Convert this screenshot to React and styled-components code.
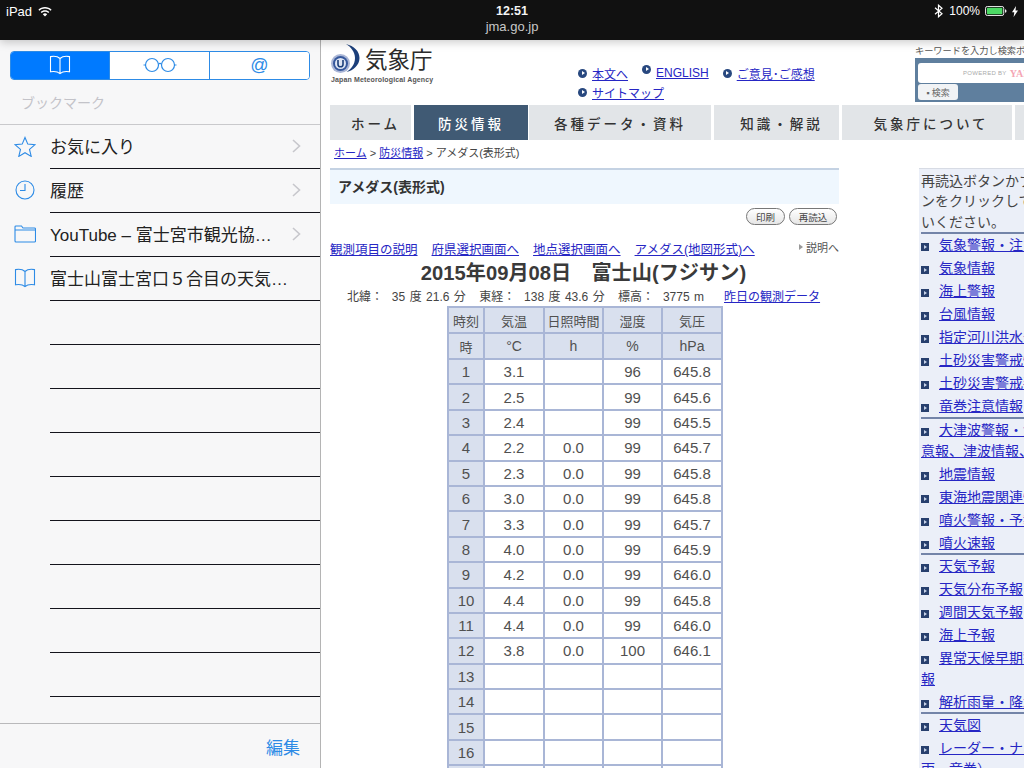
import React from "react";
import styled, { createGlobalStyle } from "styled-components";

const FONT = `"Liberation Sans", "Noto Sans CJK JP", sans-serif`;

const Global = createGlobalStyle`
  html, body { margin: 0; padding: 0; background: #fff; overflow: hidden; }
  body { font-family: ${FONT}; }
`;

const Screen = styled.div`
  width: 1024px; height: 768px; overflow: hidden;
  display: flex; flex-direction: column;
`;
const StatusBar = styled.header`
  height: 40px; flex: none; background: #111; color: #fff;
  display: grid; grid-template-columns: 1fr auto 1fr; padding: 3px 6px 0;
  box-sizing: border-box; position: relative; z-index: 2;
  box-shadow: 0 2px 9px rgba(0,0,0,.22);
`;
const StatusLeft = styled.div`
  display: flex; align-items: center; gap: 6px; height: 16px; font-size: 13px;
`;
const StatusRight = styled.div`
  display: flex; align-items: center; justify-content: flex-end; gap: 5px; height: 16px;
  font-size: 12px;
`;
const StatusCenter = styled.div`
  display: flex; flex-direction: column; align-items: center; font-size: 13px; line-height: 16px;
`;
const Clock = styled.span`font-weight: 700; color: #f4f4f4; font-size: 12.5px;`;
const Domain = styled.span`color: #c8c8c8; margin-top: 0;`;
const Percent = styled.span`margin-left: 1px;`;

const Body = styled.div`flex: 1; display: flex; min-height: 0;`;

const Sidebar = styled.aside`
  width: 321px; flex: none; box-sizing: border-box; background: #f7f7f8;
  border-right: 1px solid #b4b4b4; display: flex; flex-direction: column;
`;
const SideHead = styled.div`
  height: 85px; flex: none; box-sizing: border-box; padding: 11px 10px 0;
  border-bottom: 1px solid #c9c9cc;
`;
const Segments = styled.div`
  height: 29px; display: grid; grid-template-columns: 98px 100px 100px; box-sizing: border-box;
  border: 1px solid #2d8be6; border-radius: 4px; overflow: hidden; background: #fff;
`;
const Segment = styled.div`
  display: flex; align-items: center; justify-content: center;
  background: ${p => (p.$active ? "#007aff" : "#fff")};
  color: ${p => (p.$active ? "#fff" : "#2d8be6")};
  border-left: ${p => (p.$first ? "none" : "1px solid #2d8be6")};
  font-size: 18px; padding-bottom: 1px;
`;
const SideTitle = styled.div`
  margin: 13px 0 0 11px; font-size: 14px; line-height: 20px; color: #c3c3c9;
`;
const Rows = styled.div`flex: 1; display: flex; flex-direction: column; min-height: 0;`;
const Row = styled.div`
  height: 44px; flex: none; box-sizing: border-box; display: flex; align-items: center;
  padding-left: 13px; position: relative;
`;
const RowIcon = styled.div`
  width: 24px; height: 24px; margin: -2px 13px 0 0; color: #2d8be6;
  display: flex; align-items: center; justify-content: center; flex: none;
`;
const RowBody = styled.div`
  flex: 1; height: 44px; box-sizing: border-box; border-bottom: 1px solid #14141c;
  display: flex; align-items: center; justify-content: space-between; padding: 0 19px 2px 0;
  font-size: 17px; color: #222; white-space: nowrap; margin-left: ${p => (p.$empty ? "37px" : "0")};
`;
const Footer = styled.div`
  height: 45px; flex: none; box-sizing: border-box; border-top: 1px solid #b9b9bb;
  margin-top: auto; display: flex; align-items: center; justify-content: flex-end;
  padding: 0 20px 0 0; font-size: 17px; color: #2d8be6;
`;

const Web = styled.main`
  flex: 1; min-width: 0; overflow: hidden; background: #fff; padding-left: 9px;
  color: #333;
`;
const Masthead = styled.div`
  height: 65px; display: grid; grid-template-columns: 247px 338px 240px;
`;
const LogoBlock = styled.div`padding-top: 4px; width: 104px;`;
const LogoTop = styled.div`display: flex; align-items: center; gap: 5px; height: 32px;`;
const LogoName = styled.span`
  font-size: 22.500px; line-height: 30px; color: #2b2b2b; font-weight: 400; padding-top: 1px;
`;
const LogoSub = styled.div`
  font-size: 7px; line-height: 10px; font-weight: 700; color: #555; white-space: nowrap; margin-top: -1px;
  letter-spacing: .14px; padding-left: 1px;
`;
const TopLinks = styled.div`padding: 24px 0 0 1px; font-size: 12px;`;
const TopLine = styled.div`display: flex; align-items: center; height: 19px; white-space: nowrap;`;
const TopLink = styled.a`
  color: #2626c4; text-decoration: underline; margin-left: 5px; margin-right: ${p => p.$mr || 0}px;
  position: relative; top: ${p => p.$top || 0}px;
`;
const Bullet = styled.span`
  width: 9px; height: 9px; border-radius: 50%; background: #28487f; display: inline-block; position: relative; flex: none;
  top: ${p => p.$top || 0}px;
  &::after {
    content: ""; position: absolute; left: 3.500px; top: 2px;
    border-left: 3.500px solid #fff; border-top: 2.500px solid transparent; border-bottom: 2.500px solid transparent;
  }
`;
const Search = styled.div`padding-top: 6px; font-size: 9.200px; color: #555; width: 240px;`;
const SearchLabel = styled.div`line-height: 11px; white-space: nowrap;`;
const SearchBox = styled.div`
  background: #5f7f9e; height: 44px; box-sizing: border-box; padding: 5px 0 0 3px; margin-top: 1px;
`;
const SearchInput = styled.div`
  height: 20px; background: #fff; border-radius: 3px 0 0 3px; margin-bottom: 1px;
  display: flex; align-items: center; padding-left: 45px; font-size: 6px; color: #aaa; letter-spacing: .3px; white-space: nowrap;
`;
const Yahoo = styled.b`
  color: #f4a6b4; font-family: "Liberation Serif", serif; font-size: 10px; margin-left: 3px; letter-spacing: 0;
`;
const SearchBtn = styled.div`
  width: 40px; height: 16px; background: #f1f3f5; border-radius: 3px; font-size: 9px; color: #666;
  display: flex; align-items: center; justify-content: center; gap: 3px; box-sizing: border-box;
`;

const Nav = styled.nav`display: flex; height: 35px;`;
const Tab = styled.div`
  width: ${p => p.$w}px; margin-left: ${p => p.$gap}px; flex: none; box-sizing: border-box;
  padding-left: ${p => p.$pl || 0}px;
  background: ${p => (p.$active ? "#405a74" : "#e2e5e8")};
  color: ${p => (p.$active ? "#fff" : "#333")};
  display: flex; align-items: center; justify-content: center;
  font-size: 13.500px; font-weight: 500; letter-spacing: 3px; white-space: nowrap;
`;

const Columns = styled.div`display: flex; gap: 80px; align-items: flex-start;`;
const MainCol = styled.div`width: 509px; flex: none;`;
const Crumb = styled.div`
  height: 28px; padding: 5px 0 0 4px; box-sizing: border-box; font-size: 11px; line-height: 16px; color: #444;
  a { color: #2626c4; text-decoration: underline; }
`;
const Heading = styled.h1`
  margin: 0; height: 36px; box-sizing: border-box; background: #eff7fe; border-top: 2px solid #c4d2e3;
  font-size: 14px; font-weight: 700; line-height: 34px; padding-left: 8px; color: #333;
`;
const Buttons = styled.div`display: flex; justify-content: flex-end; gap: 4px; padding: 4px 2px 0 0; height: 21px; box-sizing: content-box;`;
const Pill = styled.div`
  width: ${p => p.$w}px; height: 17px; box-sizing: border-box; border: 1px solid #777; border-radius: 9px;
  background: linear-gradient(#fff, #e6e6e6); font-size: 9.500px; color: #444;
  display: flex; align-items: center; justify-content: center;
`;
const LinkRow = styled.div`
  display: flex; align-items: center; height: 17px; margin-top: 11px; font-size: 12.500px; white-space: nowrap;
`;
const PageLink = styled.a`color: #2626c4; text-decoration: underline; margin-right: 14px;`;
const Explain = styled.span`
  margin: -4px 0 0 auto; font-size: 11px; color: #555; display: flex; align-items: center; gap: 3px;
  &::before {
    content: ""; border-left: 4px solid #999; border-top: 3px solid transparent; border-bottom: 3px solid transparent;
  }
`;
const Title = styled.h2`
  margin: 3px 0 0; font-size: 20.200px; line-height: 26px; font-weight: 700; text-align: center; color: #3a3a3a;
  white-space: pre; position: relative; left: -1px;
`;
const Coords = styled.div`
  display: flex; justify-content: flex-start; font-size: 12px; line-height: 16px; color: #444; margin-top: 3px;
  padding-left: 17px; white-space: pre; word-spacing: 1.100px;
  a { color: #2626c4; text-decoration: underline; margin-left: 20px; word-spacing: 0; }
`;
const DataGrid = styled.div`
  margin: 1px 0 0 117px; display: grid; width: 276px; box-sizing: border-box;
  grid-template-columns: 36px 60px 59px 59px 60px;
  grid-auto-rows: 25.400px; grid-template-rows: 26px 26px;
  border-top: 2px solid #a9b6d6; border-left: 2px solid #a9b6d6;
`;
const Cell = styled.div`
  box-sizing: border-box; border-right: 2px solid #a9b6d6; border-bottom: 2px solid #a9b6d6;
  display: flex; align-items: center; justify-content: center; color: #505050; white-space: nowrap;
  font-size: ${p => p.$fs || 15}px;
  background: ${p => (p.$head ? "#d9e0ee" : "#fff")};
`;

const SidePanel = styled.div`
  width: 300px; flex: none; margin-top: 28px; background: #ebeff8; border-top: 1px solid #d7dbe4;
  font-size: 14px; padding: 2px 0 0 2px; box-sizing: border-box; color: #444; white-space: nowrap;
`;
const PanelNote = styled.div`line-height: 20.400px;`;
const PanelGroup = styled.div`
  border-top: 2px solid #7384a8;
  & + & { margin-top: -1.700px; }
`;
const PanelItem = styled.div`
  line-height: 21px; padding: 1px 0;
  a { color: #2626c4; text-decoration: underline; }
`;
const Square = styled.span`
  display: inline-block; width: 8px; height: 8px; background: #28406e; margin-right: 10px; position: relative; top: 1px;
  &::after {
    content: ""; position: absolute; left: 3px; top: 2px;
    border-left: 3px solid #c9d4ea; border-top: 2px solid transparent; border-bottom: 2px solid transparent;
  }
`;

const Book = ({ w = 22, h = 20 }) => (
  <svg width={w} height={h} viewBox="0 0 22 20" fill="none" stroke="currentColor" strokeWidth="1.100">
    <path d="M11 3.500C9 1.600 5 1 1.500 1.600V16.800C5 16.200 9 16.800 11 18.600C13 16.800 17 16.200 20.500 16.800V1.600C17 1 13 1.600 11 3.500ZM11 3.500V18.600" />
  </svg>
);
const Glasses = () => (
  <svg width="34" height="16" viewBox="0 0 34 16" fill="none" stroke="currentColor" strokeWidth="1.200">
    <circle cx="9" cy="8" r="6.500" /><circle cx="25" cy="8" r="6.500" />
    <path d="M15.500 7c1-.7 2-.7 3 0M0.500 8h2M31.500 8h2" />
  </svg>
);
const Star = () => (
  <svg width="22" height="21" viewBox="0 0 22 21" fill="none" stroke="currentColor" strokeWidth="1.100">
    <path d="M11 1.500l2.800 6.600 7.200.6-5.500 4.700 1.700 7-6.200-3.700-6.200 3.700 1.700-7L1 8.700l7.200-.6z" />
  </svg>
);
const ClockIcon = () => (
  <svg width="20" height="20" viewBox="0 0 20 20" fill="none" stroke="currentColor" strokeWidth="1.100">
    <circle cx="10" cy="10" r="9" /><path d="M10 4v6.500H5" />
  </svg>
);
const Folder = () => (
  <svg width="22" height="18" viewBox="0 0 22 18" fill="none" stroke="currentColor" strokeWidth="1.100">
    <path d="M1 4V1.800C1 1.200 1.300 1 2 1h5.500l1.500 2h11.500c.6 0 1 .4 1 1v12c0 .6-.4 1-1 1H2c-.7 0-1-.4-1-1zM1 5h20.500" />
  </svg>
);
const Chevron = () => (
  <svg width="9" height="14" viewBox="0 0 9 14" fill="none" stroke="#c7c7cc" strokeWidth="1.600">
    <path d="M1 1l6.500 6L1 13" />
  </svg>
);
const Wifi = () => (
  <svg width="14" height="11" viewBox="0 0 14 11" fill="#fff">
    <path d="M7 1c2.600 0 4.900 1 6.600 2.700l-1 1.100C11.100 3.400 9.200 2.500 7 2.500S2.900 3.400 1.400 4.800l-1-1.100C2.100 2 4.400 1 7 1zm0 3.200c1.700 0 3.200.6 4.300 1.700l-1 1.100C9.400 6.200 8.300 5.700 7 5.700s-2.400.5-3.300 1.300l-1-1.100C3.800 4.800 5.300 4.200 7 4.200zm0 3.100c.9 0 1.600.3 2.200.9L7 10.500 4.800 8.200c.6-.6 1.300-.9 2.200-.9z" />
  </svg>
);
const Bluetooth = () => (
  <svg width="9" height="14" viewBox="0 0 9 14" fill="none" stroke="#fff" strokeWidth="1.200">
    <path d="M1 3.800l7 6-3.500 3V1.200l3.500 3-7 6" />
  </svg>
);
const Battery = () => (
  <svg width="22" height="10" viewBox="0 0 24 11">
    <rect x=".5" y=".5" width="20" height="10" rx="2" fill="none" stroke="#fff" />
    <rect x="2" y="2" width="17" height="7" rx="1" fill="#4cd964" />
    <path d="M22 3.500c1 .2 1.500 1 1.500 2s-.5 1.800-1.500 2z" fill="#fff" />
  </svg>
);
const Bolt = () => (
  <svg width="6" height="11" viewBox="0 0 6 11" fill="#fff"><path d="M4 0L0 6.200h2.300L1.600 11 6 4.500H3.500z" /></svg>
);
const Logo = () => (
  <svg width="30" height="34" viewBox="0 0 30 34">
    <path d="M16 1C24 3 29.500 8 29.500 15c0 7-6 12.500-13 14 4.500-3 8.500-7.500 8.500-14C25 9 21 4 16 1z" fill="#1c3f7a" />
    <circle cx="10.500" cy="20.500" r="9.500" fill="#aab6d6" />
    <circle cx="10.500" cy="20.500" r="7.500" fill="#36589c" />
    <circle cx="10.500" cy="20.500" r="5.500" fill="#dfe6f4" />
    <path d="M8 17v4.500c0 1.500 1 2.300 2.500 2.300s2.500-.8 2.500-2.300V17" fill="none" stroke="#1c3f7a" strokeWidth="1.600" />
  </svg>
);

const hours = [
  ["1", "3.1", "", "96", "645.8"], ["2", "2.5", "", "99", "645.6"], ["3", "2.4", "", "99", "645.5"],
  ["4", "2.2", "0.0", "99", "645.7"], ["5", "2.3", "0.0", "99", "645.8"], ["6", "3.0", "0.0", "99", "645.8"],
  ["7", "3.3", "0.0", "99", "645.7"], ["8", "4.0", "0.0", "99", "645.9"], ["9", "4.2", "0.0", "99", "646.0"],
  ["10", "4.4", "0.0", "99", "645.8"], ["11", "4.4", "0.0", "99", "646.0"], ["12", "3.8", "0.0", "100", "646.1"],
  ["13", "", "", "", ""], ["14", "", "", "", ""], ["15", "", "", "", ""], ["16", "", "", "", ""], ["17", "", "", "", ""],
];
const head1 = ["時刻", "気温", "日照時間", "湿度", "気圧"];
const head2 = ["時", "°C", "h", "%", "hPa"];

const groups = [
  [["気象警報・注意報"], ["気象情報"], ["海上警報"], ["台風情報"], ["指定河川洪水予報"], ["土砂災害警戒情報"], ["土砂災害警戒判定メッシュ情報"], ["竜巻注意情報"]],
  [["大津波警報・注", "意報、津波情報、津波予報"], ["地震情報"], ["東海地震関連情報"], ["噴火警報・予報"], ["噴火速報"]],
  [["天気予報"], ["天気分布予報"], ["週間天気予報"], ["海上予報"], ["異常天候早期警戒情", "報"], ["解析雨量・降水短時間予報"]],
  [["天気図"], ["レーダー・ナウキャスト（降", "雨・竜巻）"]],
];

export default function App() {
  return (
    <Screen>
      <Global />
      <StatusBar>
        <StatusLeft>iPad <Wifi /></StatusLeft>
        <StatusCenter><Clock>12:51</Clock><Domain>jma.go.jp</Domain></StatusCenter>
        <StatusRight><Bluetooth /><Percent>100%</Percent><Battery /><Bolt /></StatusRight>
      </StatusBar>
      <Body>
        <Sidebar>
          <SideHead>
            <Segments>
              <Segment $active $first><Book /></Segment>
              <Segment><Glasses /></Segment>
              <Segment>@</Segment>
            </Segments>
            <SideTitle>ブックマーク</SideTitle>
          </SideHead>
          <Rows>
            <Row><RowIcon><Star /></RowIcon><RowBody>お気に入り<Chevron /></RowBody></Row>
            <Row><RowIcon><ClockIcon /></RowIcon><RowBody>履歴<Chevron /></RowBody></Row>
            <Row><RowIcon><Folder /></RowIcon><RowBody>YouTube – 富士宮市観光協…<Chevron /></RowBody></Row>
            <Row><RowIcon><Book /></RowIcon><RowBody>富士山富士宮口５合目の天気…</RowBody></Row>
            {Array.from({ length: 9 }).map((_, i) => (
              <Row key={i}><RowBody $empty /></Row>
            ))}
            <Footer>編集</Footer>
          </Rows>
        </Sidebar>
        <Web>
          <Masthead>
            <LogoBlock>
              <LogoTop><Logo /><LogoName>気象庁</LogoName></LogoTop>
              <LogoSub>Japan Meteorological Agency</LogoSub>
            </LogoBlock>
            <TopLinks>
              <TopLine>
                <Bullet /><TopLink $mr={14}>本文へ</TopLink>
                <Bullet $top={-4} /><TopLink $mr={14} $top={-1}>ENGLISH</TopLink>
                <Bullet /><TopLink>ご意見･ご感想</TopLink>
              </TopLine>
              <TopLine><Bullet /><TopLink>サイトマップ</TopLink></TopLine>
            </TopLinks>
            <Search>
              <SearchLabel>キーワードを入力し検索ボタンを押してください</SearchLabel>
              <SearchBox>
                <SearchInput>POWERED BY<Yahoo>YAHOO!</Yahoo></SearchInput>
                <SearchBtn>▪ 検索</SearchBtn>
              </SearchBox>
            </Search>
          </Masthead>
          <Nav>
            <Tab $w={81} $gap={0} $pl={10}>ホーム</Tab>
            <Tab $w={114} $gap={3} $active>防災情報</Tab>
            <Tab $w={182} $gap={1}>各種データ・資料</Tab>
            <Tab $w={125} $gap={3} $pl={10}>知識・解説</Tab>
            <Tab $w={170} $gap={3} $pl={8}>気象庁について</Tab>
            <Tab $w={60} $gap={3} />
          </Nav>
          <Columns>
            <MainCol>
              <Crumb><a>ホーム</a> &gt; <a>防災情報</a> &gt; アメダス(表形式)</Crumb>
              <Heading>アメダス(表形式)</Heading>
              <Buttons><Pill $w={39}>印刷</Pill><Pill $w={48}>再読込</Pill></Buttons>
              <LinkRow>
                <PageLink>観測項目の説明</PageLink>
                <PageLink>府県選択画面へ</PageLink>
                <PageLink>地点選択画面へ</PageLink>
                <PageLink>アメダス(地図形式)へ</PageLink>
                <Explain>説明へ</Explain>
              </LinkRow>
              <Title>2015年09月08日　富士山(フジサン)</Title>
              <Coords>北緯：  35 度 21.6 分   東経：  138 度 43.6 分   標高：  3775 m<a>昨日の観測データ</a></Coords>
              <DataGrid>
                {head1.map(t => <Cell key={t} $head $fs={13}>{t}</Cell>)}
                {head2.map((t, i) => <Cell key={t} $head $fs={i === 0 ? 13 : 14}>{t}</Cell>)}
                {hours.map(r => r.map((v, i) => <Cell key={r[0] + i} $head={i === 0}>{v}</Cell>))}
              </DataGrid>
            </MainCol>
            <SidePanel>
              <PanelNote>再読込ボタンかブラウザの更新ボタ<br />ンをクリックして最新の情報をご覧<br />いください。</PanelNote>
              {groups.map((g, gi) => (
                <PanelGroup key={gi}>
                  {g.map(lines => (
                    <PanelItem key={lines[0]}>
                      <Square /><a>{lines[0]}</a>
                      {lines[1] && <><br /><a>{lines[1]}</a></>}
                    </PanelItem>
                  ))}
                </PanelGroup>
              ))}
            </SidePanel>
          </Columns>
        </Web>
      </Body>
    </Screen>
  );
}
